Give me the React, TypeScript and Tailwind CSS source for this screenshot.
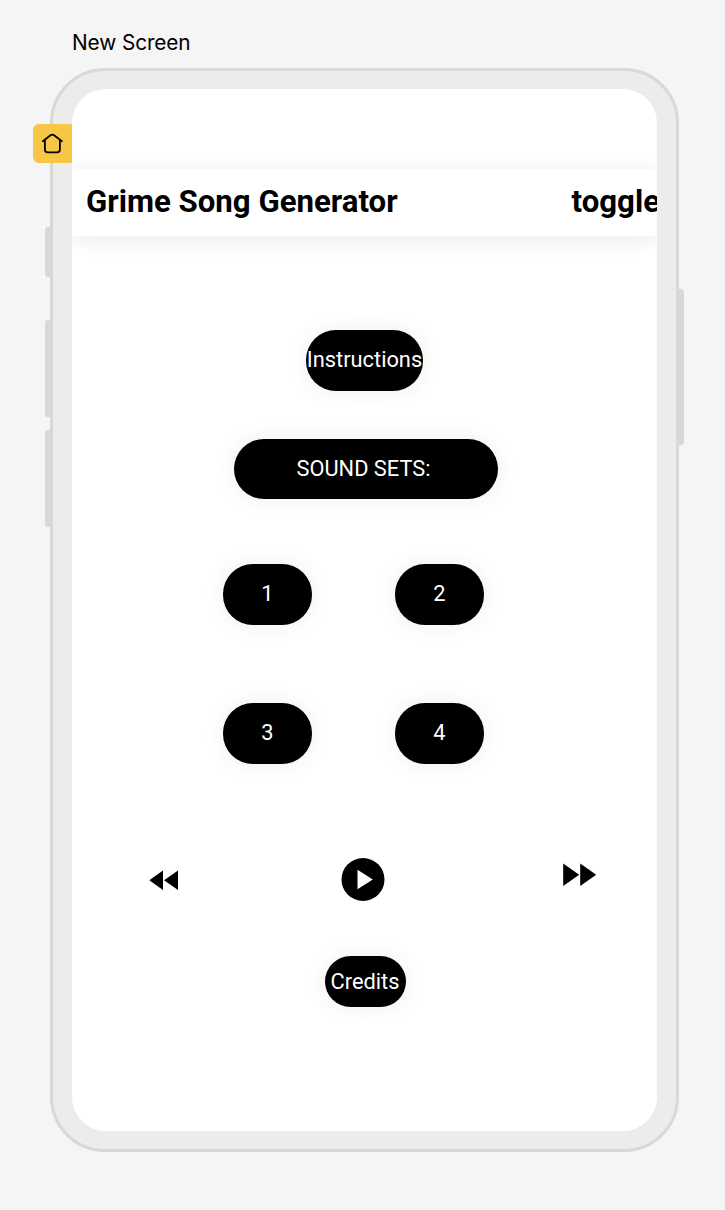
import type { ReactNode } from "react";

function Pill({ className, children }: { className: string; children: ReactNode }) {
  return (
    <button
      className={`flex shrink-0 items-center justify-center whitespace-nowrap rounded-[30px] bg-black text-[21.8px] leading-none text-white shadow-[0_0_22px_rgba(0,0,0,0.07)] ${className}`}
    >
      {children}
    </button>
  );
}

function HomeTab() {
  return (
    <div className="absolute -left-[20px] top-[53px] flex h-[39px] w-[39px] items-center justify-center rounded-l-[6px] bg-[#f7c644]">
      <svg width="39" height="39" viewBox="0 0 39 39" fill="none" stroke="#000" strokeWidth="1.8" strokeLinecap="round" strokeLinejoin="round">
        <path d="M9.9 17.3 L17.5 11.2 Q19.3 9.9 21.1 11.2 L28.9 17.3" />
        <path d="M11.9 16.2 V25.5 Q11.9 28.4 14.8 28.4 H24 Q26.9 28.4 26.9 25.5 V16.2" />
      </svg>
    </div>
  );
}

function Header() {
  return (
    <header className="mt-[80px] flex h-[67px] w-full shrink-0 items-center justify-between whitespace-nowrap bg-white pb-[2px] text-[31.2px] font-bold leading-none shadow-[0_3px_20px_rgba(0,0,0,0.09)]">
      <h1 className="pl-[14px]">Grime Song Generator</h1>
      <div className="w-[85.5px]">toggle</div>
    </header>
  );
}

function Player() {
  return (
    <div className="mt-[94px] flex h-[43px] w-full shrink-0 items-start justify-between pl-[77px] pr-[60px]">
      <svg className="mt-[12px]" width="30" height="21" viewBox="0 0 30 21">
        <path d="M0.3 10.2 L14 0.4 V19.9 Z M15 10.2 L29 0.4 V19.9 Z" />
      </svg>
      <svg className="-ml-[16px]" width="44" height="43" viewBox="0 0 44 43">
        <circle cx="22" cy="21.5" r="21.5" />
        <path d="M16.5 11.8 V31.2 L31.8 21.5 Z" fill="#fff" />
      </svg>
      <svg className="mt-[5px]" width="35" height="24" viewBox="0 0 35 24">
        <path d="M1.2 0.5 V23.1 L17.2 11.8 Z M18.2 0.5 V23.1 L34.2 11.8 Z" />
      </svg>
    </div>
  );
}

export default function App() {
  return (
    <div className="flex h-[1210px] w-[725px] flex-col overflow-hidden bg-[#f5f5f5] pl-[50px] font-['Roboto',sans-serif] text-black">
      <div className="flex h-[68px] shrink-0 items-start pl-[22px] pt-[29px] font-['Inter',sans-serif] text-[20.8px] leading-[27px] tracking-[-0.1px]">
        New Screen
      </div>
      <div className="relative h-[1084px] w-[629px] shrink-0 rounded-[55px] border-[3px] border-[#d8d8d8] bg-[#ececec] px-[19px] pt-[18px]">
        <div className="absolute -left-[8px] top-[156px] h-[50px] w-[5px] rounded-l-[3px] bg-[#d8d8d8]" />
        <div className="absolute -left-[8px] top-[249px] h-[97px] w-[5px] rounded-l-[3px] bg-[#d8d8d8]" />
        <div className="absolute -left-[8px] top-[359px] h-[97px] w-[5px] rounded-l-[3px] bg-[#d8d8d8]" />
        <div className="absolute -right-[8px] top-[218px] h-[156px] w-[5px] rounded-r-[3px] bg-[#d8d8d8]" />
        <HomeTab />
        <main className="flex h-[1042px] w-[585px] flex-col items-center overflow-hidden rounded-[34px] bg-white">
          <Header />
          <Pill className="mt-[94px] h-[61px] w-[117px] pb-[2px]">Instructions</Pill>
          <Pill className="ml-[3px] mt-[48px] h-[60px] w-[264px] pr-[5px]">SOUND SETS:</Pill>
          <div className="mr-[22px] mt-[65px] grid shrink-0 grid-cols-2 gap-x-[83px] gap-y-[78px]">
            <Pill className="h-[61px] w-[89px] pb-[2px]">1</Pill>
            <Pill className="h-[61px] w-[89px] pb-[2px]">2</Pill>
            <Pill className="h-[61px] w-[89px] pb-[2px]">3</Pill>
            <Pill className="h-[61px] w-[89px] pb-[2px]">4</Pill>
          </div>
          <Player />
          <Pill className="ml-[2px] mt-[55px] h-[51px] w-[81px] pr-[1px]">Credits</Pill>
        </main>
      </div>
    </div>
  );
}
